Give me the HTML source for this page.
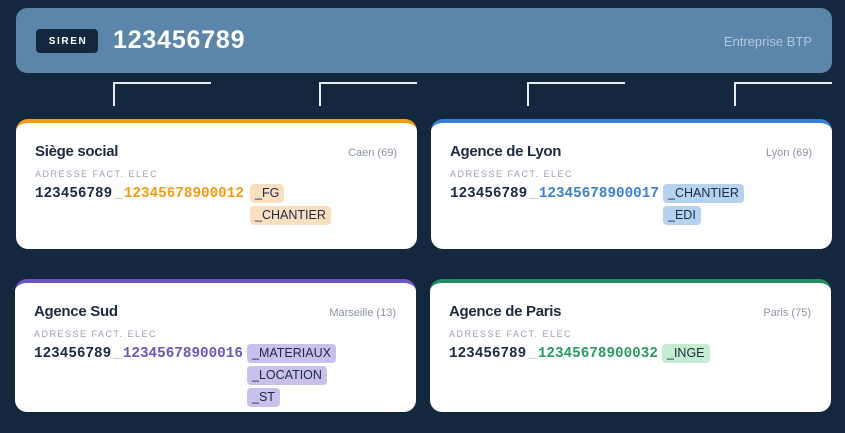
<!DOCTYPE html>
<html><head><meta charset="utf-8"><style>
*{margin:0;padding:0;box-sizing:border-box}
body{width:845px;height:433px;background:#13283f;position:relative;overflow:hidden;font-family:"Liberation Sans",sans-serif}
.hdr{position:absolute;left:16px;top:8px;width:816px;height:65px;background:#5b86aa;border-radius:11px}
.siren{position:absolute;left:20px;top:21px;width:62px;height:24px;background:#13283f;border-radius:4px;color:#fff;font-weight:bold;font-size:10px;letter-spacing:1.6px;display:flex;align-items:center;justify-content:center;padding-left:2px}
.num{position:absolute;left:97px;top:18px;color:#fff;font-size:25px;font-weight:bold;letter-spacing:0.8px}
.ent{position:absolute;right:20px;top:26px;color:#b3c8dc;font-size:13px}
.ln{position:absolute;border-left:2px solid #e6ecf2;border-top:2px solid #e6ecf2;width:98px;height:24px}
.card{position:absolute;width:401px;background:#fff;border-radius:12px;border-top:4px solid}
.t{position:absolute;left:19px;top:20px;font-size:15px;font-weight:bold;color:#1e2a44;letter-spacing:-0.3px}
.loc{position:absolute;right:20px;top:24px;font-size:11px;color:#8a93a3}
.lb{position:absolute;left:19px;top:46px;font-size:9px;color:#9aa1ae;letter-spacing:1.5px}
.row{position:absolute;left:19px;top:63px;font-family:"Liberation Mono",monospace;font-weight:bold;font-size:14.3px;color:#1e2a44;white-space:nowrap}
.us{color:#b5bac4;margin:0 1px 0 2px}
.tags{position:absolute;top:61px}
.tag{display:block;width:max-content;height:19px;line-height:19px;padding:0 5px;border-radius:4px;font-size:12.5px;color:#1e2a44;margin-bottom:3px}
</style></head><body>
<div class="hdr"><div class="siren">SIREN</div><div class="num">123456789</div><div class="ent">Entreprise BTP</div></div>
<div class="ln" style="left:113px;top:82px"></div>
<div class="ln" style="left:319px;top:82px"></div>
<div class="ln" style="left:527px;top:82px"></div>
<div class="ln" style="left:734px;top:82px"></div>

<div class="card" style="left:16px;top:119px;height:130px;border-color:#f39c12">
<div class="t">Siège social</div><div class="loc">Caen (69)</div><div class="lb">ADRESSE FACT. ELEC</div>
<div class="row">123456789<span class="us">_</span><span style="color:#f39c12">12345678900012</span></div>
<div class="tags" style="left:234px"><span class="tag" style="background:#f8dfc0">_FG</span><span class="tag" style="background:#f8dfc0">_CHANTIER</span></div>
</div>

<div class="card" style="left:431px;top:119px;height:130px;border-color:#3a80d8">
<div class="t">Agence de Lyon</div><div class="loc">Lyon (69)</div><div class="lb">ADRESSE FACT. ELEC</div>
<div class="row">123456789<span class="us">_</span><span style="color:#3a80d8">12345678900017</span></div>
<div class="tags" style="left:232px"><span class="tag" style="background:#b5d3ee">_CHANTIER</span><span class="tag" style="background:#b5d3ee">_EDI</span></div>
</div>

<div class="card" style="left:15px;top:279px;height:133px;border-color:#6e55c0">
<div class="t">Agence Sud</div><div class="loc">Marseille (13)</div><div class="lb">ADRESSE FACT. ELEC</div>
<div class="row">123456789<span class="us">_</span><span style="color:#6e55c0">12345678900016</span></div>
<div class="tags" style="left:232px"><span class="tag" style="background:#c9c0ee">_MATERIAUX</span><span class="tag" style="background:#c9c0ee">_LOCATION</span><span class="tag" style="background:#c9c0ee">_ST</span></div>
</div>

<div class="card" style="left:430px;top:279px;height:133px;border-color:#238f63">
<div class="t">Agence de Paris</div><div class="loc">Paris (75)</div><div class="lb">ADRESSE FACT. ELEC</div>
<div class="row">123456789<span class="us">_</span><span style="color:#2a9a65">12345678900032</span></div>
<div class="tags" style="left:232px"><span class="tag" style="background:#c4ecd0">_INGE</span></div>
</div>
</body></html>
